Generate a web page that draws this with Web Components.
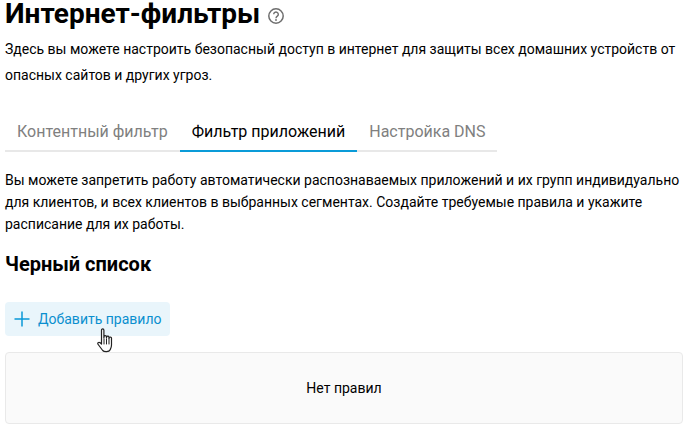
<!DOCTYPE html>
<html><head><meta charset="utf-8"><style>
html,body{margin:0;padding:0;background:#fff;overflow:hidden}
body{font-family:Roboto,sans-serif;color:#000;width:689px;height:429px}
</style></head><body>
<fw-page></fw-page>
<script>
function def(n,html){customElements.define(n,class extends HTMLElement{constructor(){super();this.attachShadow({mode:'open'}).innerHTML=html}})}
def('fw-title',`<style>:host{display:flex;align-items:center;gap:8px;font:700 28px/28px Roboto,sans-serif;height:28px;white-space:nowrap}svg{display:block;margin-top:4px}</style><slot></slot><svg width="16" height="16" viewBox="0 0 16 16" fill="none" stroke="#6e6e6e"><circle cx="8" cy="8" r="7.200" stroke-width="1.500"/><path d="M5.700 6.300a2.300 2.300 0 1 1 3.600 1.900c-.9.6-1.300 1-1.300 2" stroke-width="1.400"/><circle cx="8" cy="12" r=".9" fill="#6e6e6e" stroke="none"/></svg>`);
def('fw-tabs',`<style>:host{display:flex;margin-left:5px;width:492px;box-sizing:border-box;border-bottom:2px solid #e8e8e8;height:38px;font:16px/20px Roboto,sans-serif;white-space:nowrap}</style><slot></slot>`);
def('fw-tab',`<style>:host{display:block;box-sizing:border-box;padding:8px 12px 0;height:38px;color:#808080}:host([active]){color:#000;border-bottom:2px solid #0a9bd8}</style><slot></slot>`);
def('fw-add',`<style>:host{display:flex;align-items:center;gap:8px;height:34px;width:165px;box-sizing:border-box;padding-left:9px;background:#e9f5fb;border-radius:4px;color:#0a8fcf;font:14px/20px Roboto,sans-serif;white-space:nowrap}svg{display:block}</style><svg width="16" height="16" viewBox="0 0 16 16" stroke="#0a98d8" stroke-width="1.500"><path d="M8 .5v15M.5 8h15"/></svg><slot></slot>`);
def('fw-empty',`<style>:host{display:flex;align-items:center;justify-content:center;box-sizing:border-box;width:678px;height:72px;background:#fafafa;border:1px solid #e9e9e9;border-radius:4px;font:14px/20px Roboto,sans-serif}</style><slot></slot>`);
def('fw-cursor',`<style>:host{position:absolute;left:97px;top:328px;width:18px;height:26px}svg{display:block}</style><svg width="18" height="26" viewBox="0 0 18 26" fill="none" stroke="#222" stroke-width="1.200" stroke-linejoin="round" stroke-linecap="round"><path d="M4.500 2.200c0-1.700 2.400-1.700 2.400 0V10l.2-1.500c0-1.200 2.300-1.200 2.300 0l.1 1.500.1-1c.1-1.100 2.200-1.100 2.300 0l.1 1.500.2-.8c.2-1 2.300-.9 2.300.4v6.800c0 2.400-.8 3.500-1.500 5.100-.8 2-6 2-7.300.5L1.200 16.500c-1.100-1.400.4-3 2-1.700l1.300 1.200z" fill="#fff"/><path d="M7 11v5M9.500 11v5M12 11v5" stroke-width="1"/></svg>`);
def('fw-page',`<style>:host{display:block;position:relative;height:429px;font:14px/22px Roboto,sans-serif}
.h{padding:0 5px}
p{margin:0;padding:0 5px;font-size:14px;line-height:22px;white-space:nowrap}
h2{margin:0;padding:0 5px;font:700 20px/24px Roboto,sans-serif}
</style>
<div class="h"><fw-title>Интернет-фильтры</fw-title></div>
<p style="margin-top:8px;line-height:26px">Здесь вы можете настроить безопасный доступ в интернет для защиты всех домашних устройств от<br>опасных сайтов и других угроз.</p>
<div style="margin-top:26px"><fw-tabs><fw-tab>Контентный фильтр</fw-tab><fw-tab active>Фильтр приложений</fw-tab><fw-tab>Настройка DNS</fw-tab></fw-tabs></div>
<p style="margin-top:17px">Вы можете запретить работу автоматически распознаваемых приложений и их групп индивидуально<br>для клиентов, и всех клиентов в выбранных сегментах. Создайте требуемые правила и укажите<br>расписание для их работы.</p>
<h2 style="margin-top:17px">Черный список</h2>
<div style="margin:26px 0 0 5px;height:34px"><fw-add>Добавить правило</fw-add></div>
<div style="margin:16px 0 0 5px"><fw-empty>Нет правил</fw-empty></div>
<fw-cursor></fw-cursor>`);
</script>
</body></html>
